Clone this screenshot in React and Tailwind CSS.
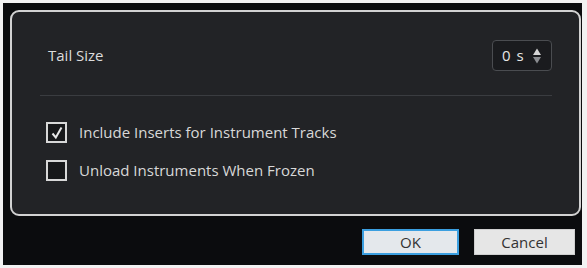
import React from "react";

const font = { fontFamily: '"Open Sans", "Noto Sans", sans-serif' };

const CheckRow = ({ checked, label }) => (
  <div className="flex items-center h-[21px]">
    <div className="w-[21px] h-[21px] border-2 border-[#d8d8d8] bg-[#17181a] flex items-center justify-center">
      {checked && (
        <svg width="14" height="14" viewBox="0 0 14 14">
          <path d="M2.5 7.5 L5.8 11.5 L11.5 1.5" fill="none" stroke="#e6e6e6" strokeWidth="2" />
        </svg>
      )}
    </div>
    <span className="ml-[12px] text-[15px] text-[#d8d8d8]">{label}</span>
  </div>
);

const App = () => {
  return (
    <div className="w-[587px] h-[268px] bg-[#f2f2f2] pt-[3px] pl-[3px] pr-[5px] pb-[3px]" style={font}>
      <div className="h-full bg-[#0b0c0e] flex flex-col pt-[7px] pl-[7px] pr-[1px]">
        <div className="h-[206px] rounded-[9px] border-2 border-[#d2d2d2] bg-[#222326] pl-[28px] pr-[27px] flex flex-col">
          <div className="flex items-center justify-between mt-[28px] h-[31px]">
            <span className="ml-[8px] text-[15px] text-[#dcdcdc]">Tail Size</span>
            <div className="w-[60px] h-[31px] rounded-[4px] border border-[#4a4c50] bg-[#1a1b1e] flex items-center pl-[9px]">
              <span className="text-[15px] text-[#e6e6e6] tracking-[1px]">0 s</span>
              <svg className="ml-[7px]" width="10" height="18" viewBox="0 0 10 18">
                <path d="M1 8 L5 1.5 L9 8 Z" fill="#d6d6d6" />
                <path d="M1 10 L5 16.5 L9 10 Z" fill="#8a8c90" />
              </svg>
            </div>
          </div>
          <div className="mt-[24px] h-[1px] bg-[#3a3c40]" />
          <div className="mt-[26px] pl-[6px] flex flex-col gap-[17px]">
            <CheckRow checked label="Include Inserts for Instrument Tracks" />
            <CheckRow label="Unload Instruments When Frozen" />
          </div>
        </div>
        <div className="flex justify-end mt-[13px] gap-[15px] pr-[6px]">
          <button className="w-[97px] h-[26px] border-2 border-[#3b9fe0] bg-[#e4e8ec] text-[15px] text-[#333]">
            OK
          </button>
          <button className="w-[101px] h-[26px] border border-[#cfcfcf] bg-[#e6e6e6] text-[15px] text-[#333]">
            Cancel
          </button>
        </div>
      </div>
    </div>
  );
};

export default App;
